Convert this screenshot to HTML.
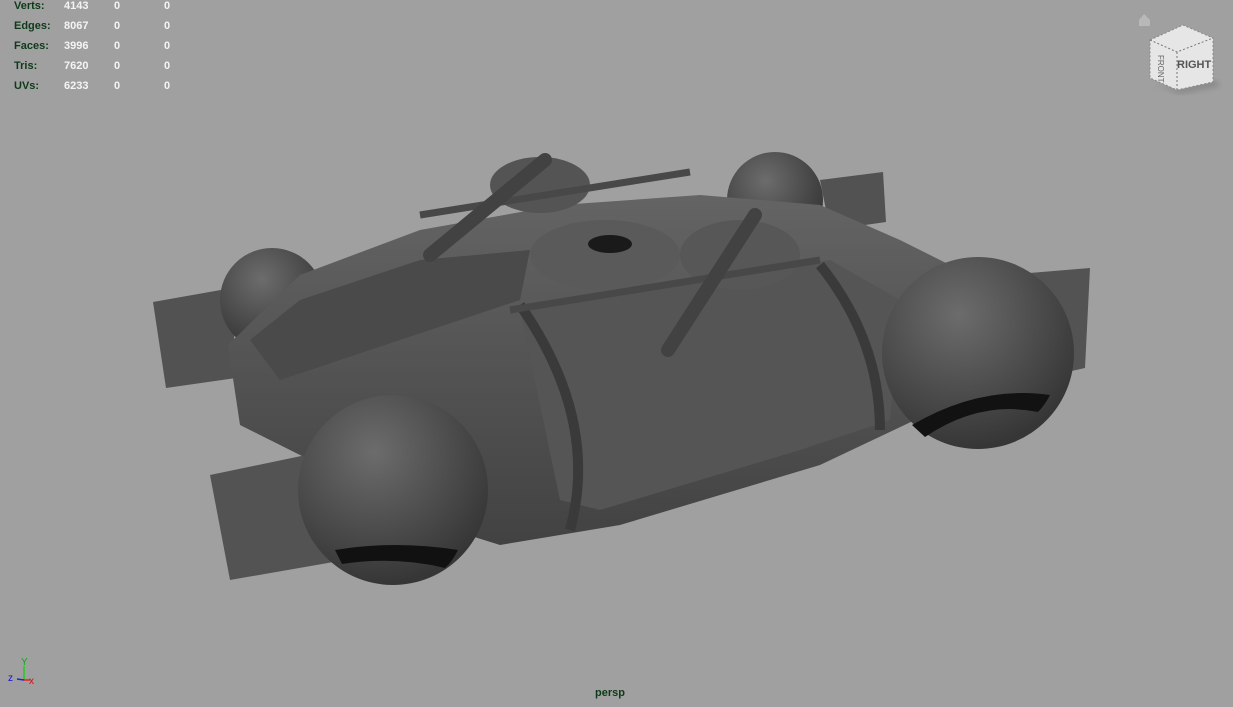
<!DOCTYPE html>
<html><head><meta charset="utf-8"><style>
html,body{margin:0;padding:0}
body{width:1233px;height:707px;background:#a0a0a0;position:relative;overflow:hidden;font-family:"Liberation Sans",sans-serif}
.hud{position:absolute;font-size:11px;font-weight:bold;line-height:20px}
.lab{left:14px;top:-4px;color:#0f3a1a}
.c{color:#f4f4f4}
</style></head><body>
<div class="hud lab">Verts:<br>Edges:<br>Faces:<br>Tris:<br>UVs:</div>
<div class="hud c" style="left:64px;top:-4px">4143<br>8067<br>3996<br>7620<br>6233</div>
<div class="hud c" style="left:114px;top:-4px">0<br>0<br>0<br>0<br>0</div>
<div class="hud c" style="left:164px;top:-4px">0<br>0<br>0<br>0<br>0</div>
<div class="hud" style="left:595px;top:683px;color:#0f3a1a">persp</div>
<svg width="1233" height="707" style="position:absolute;left:0;top:0">
<defs>
<radialGradient id="s" cx="40%" cy="30%" r="70%"><stop offset="0" stop-color="#6c6c6c"/><stop offset="1" stop-color="#363636"/></radialGradient>
<linearGradient id="b" x1="0" y1="0" x2="0" y2="1"><stop offset="0" stop-color="#646464"/><stop offset="1" stop-color="#424242"/></linearGradient>
<filter id="sh"><feGaussianBlur stdDeviation="3"/></filter>
</defs>
<polygon points="153,302 232,288 236,378 166,388" fill="#525252"/>
<circle cx="272" cy="300" r="52" fill="url(#s)"/>
<polygon points="820,180 883,172 886,222 830,230" fill="#525252"/>
<circle cx="775" cy="200" r="48" fill="url(#s)"/>
<polygon points="228,345 300,275 420,230 560,205 700,195 820,205 900,240 950,265 915,420 820,465 620,525 500,545 420,520 330,470 240,425" fill="url(#b)"/>
<polygon points="520,310 830,260 900,300 890,420 800,450 600,510 560,500" fill="#555"/>
<polygon points="250,340 300,300 420,260 530,250 520,300 280,380" fill="#4a4a4a"/>
<path d="M520,305 Q600,420 570,530" stroke="#3a3a3a" stroke-width="10" fill="none"/>
<path d="M820,265 Q880,340 880,430" stroke="#3a3a3a" stroke-width="10" fill="none"/>
<ellipse cx="540" cy="185" rx="50" ry="28" fill="#545454"/>
<ellipse cx="605" cy="255" rx="75" ry="35" fill="#5a5a5a"/>
<ellipse cx="610" cy="244" rx="22" ry="9" fill="#1a1a1a"/>
<ellipse cx="740" cy="255" rx="60" ry="35" fill="#575757"/>
<line x1="420" y1="215" x2="690" y2="172" stroke="#484848" stroke-width="7"/>
<line x1="510" y1="310" x2="820" y2="260" stroke="#484848" stroke-width="7"/>
<line x1="430" y1="255" x2="545" y2="160" stroke="#424242" stroke-width="14" stroke-linecap="round"/>
<line x1="668" y1="350" x2="755" y2="215" stroke="#424242" stroke-width="14" stroke-linecap="round"/>
<polygon points="210,475 330,450 345,560 230,580" fill="#535353"/>
<circle cx="393" cy="490" r="95" fill="url(#s)"/>
<path d="M335,550 Q395,540 458,550 Q452,562 445,568 Q395,556 342,564Z" fill="#111"/>
<polygon points="1005,275 1090,268 1085,368 1040,378" fill="#535353"/>
<circle cx="978" cy="353" r="96" fill="url(#s)"/>
<path d="M912,425 Q980,385 1050,395 Q1045,405 1038,412 Q980,400 925,437Z" fill="#121212"/>
<polygon points="1155,84 1180,94 1220,86 1215,80 1178,88" fill="#888" filter="url(#sh)"/>
<polygon points="1150,40 1183,25 1213,38 1213,82 1177,90 1150,78" fill="#e6e6e6" stroke="#888" stroke-dasharray="2,2"/>
<polyline points="1150,40 1177,52 1213,38" fill="none" stroke="#777" stroke-dasharray="2,2"/>
<line x1="1177" y1="52" x2="1177" y2="90" stroke="#777" stroke-dasharray="2,2"/>
<text x="1177" y="68" font-family="Liberation Sans" font-size="11" font-weight="bold" fill="#555">RIGHT</text>
<text x="1153" y="60" font-family="Liberation Sans" font-size="8" fill="#666" transform="rotate(90 1158 60)">FRONT</text>
<path d="M1139,20 L1144,14 L1150,20 L1150,26 L1139,26Z" fill="#b8b8b8"/>
<line x1="24" y1="680" x2="24" y2="666" stroke="#2c2" stroke-width="1.5"/>
<line x1="24" y1="680" x2="30" y2="680" stroke="#d22" stroke-width="1.5"/>
<line x1="24" y1="680" x2="17" y2="679" stroke="#22d" stroke-width="1.5"/>
<text x="21" y="665" font-size="10" fill="#1a1" font-family="Liberation Sans">Y</text>
<text x="29" y="684" font-size="10" fill="#c11" font-family="Liberation Sans">x</text>
<text x="8" y="681" font-size="10" fill="#11c" font-family="Liberation Sans">z</text>
</svg>
</body></html>
